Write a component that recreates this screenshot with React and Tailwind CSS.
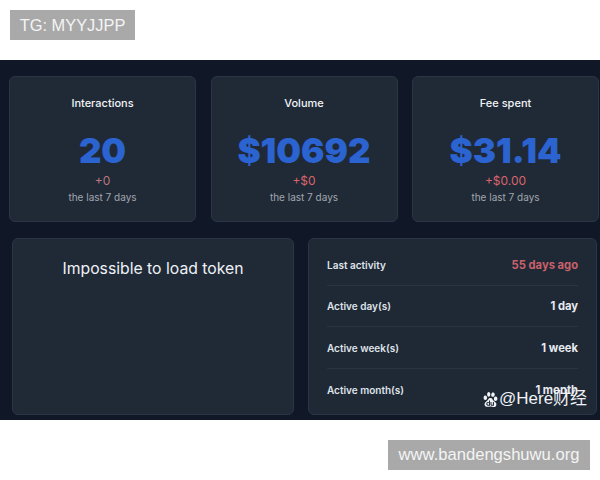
import React from 'react';
import { SiBaidu } from 'react-icons/si';

const stats = [
    { title: 'Interactions', value: '20', delta: '+0', deltaClass: 'text-[#b9777f]' },
    { title: 'Volume', value: '$10692', delta: '+$0', deltaClass: 'text-[#d9646c]' },
    { title: 'Fee spent', value: '$31.14', delta: '+$0.00', deltaClass: 'text-[#d9646c]' },
];

const activity = [
    { label: 'Last activity', value: '55 days ago', valueClass: 'text-[#c9616b]' },
    { label: 'Active day(s)', value: '1 day', valueClass: 'text-[#e8ebf0]' },
    { label: 'Active week(s)', value: '1 week', valueClass: 'text-[#e8ebf0]' },
    { label: 'Active month(s)', value: '1 month', valueClass: 'text-[#e8ebf0]' },
];

const StatCard = ({ title, value, delta, deltaClass }) => (
    <div className="w-[187px] h-[146px] flex flex-col items-center rounded-md border border-[#2b3543] bg-[#202a37] pt-[18px]">
        <h3 className="text-[11px] leading-4 font-medium text-[#f1f3f6]">{title}</h3>
        <div className="mt-[19px] text-[34.8px] leading-[40px] font-black text-[#2b63d0]">{value}</div>
        <div className={`mt-[3px] text-xs leading-4 ${deltaClass}`}>{delta}</div>
        <div className="text-[10px] leading-4 text-[#a0a6ae]">the last 7 days</div>
    </div>
);

export default function App() {
    return (
        <div className="relative w-[600px] h-[480px] overflow-hidden bg-white font-['Inter',sans-serif]">
            <div className="h-[60px] pt-2.5 pl-2.5">
                <span className="inline-flex w-[125px] h-[30px] items-center justify-center bg-[#a9a9a9] font-['Liberation_Sans',sans-serif] text-[16.4px] text-[#f4f4f4]">
                    TG: MYYJJPP
                </span>
            </div>

            <div className="relative h-[360px] bg-[#101827] pt-4">
                <div className="flex gap-[14.5px] pl-[9px]">
                    {stats.map((stat) => (
                        <StatCard key={stat.title} {...stat} />
                    ))}
                </div>

                <div className="mt-4 flex gap-[14px] pl-3">
                    <div className="w-[282px] h-[177px] rounded-md border border-[#2b3543] bg-[#202a37] pt-[18px] text-center text-[15.75px] leading-6 text-[#eef1f5]">
                        Impossible to load token
                    </div>

                    <div className="w-[289px] h-[177px] rounded-md border border-[#2b3543] bg-[#1f2936] px-[18px] pt-[5px]">
                        {activity.map((row, i) => (
                            <div
                                key={row.label}
                                className={`flex h-[41.5px] items-center justify-between pt-[2px] ${i < 3 ? 'border-b border-[#2a3441]' : ''}`}
                            >
                                <span className="text-[10px] font-semibold text-[#dfe3e9]">{row.label}</span>
                                <span className={`text-[11.2px] font-bold ${row.valueClass}`}>{row.value}</span>
                            </div>
                        ))}
                    </div>
                </div>

                {/* watermark sits over the last row */}
                <div className="absolute left-[483px] top-[329px] flex items-center gap-[1px] font-['Liberation_Sans','Noto_Sans_CJK_SC',sans-serif] text-[17px] leading-5 text-[#f0f2f5]">
                    <SiBaidu className="h-[15px] w-[15px]" />
                    <span>@Here财经</span>
                </div>
            </div>

            <div className="flex justify-end pt-5 pr-2.5">
                <span className="inline-flex w-[202px] h-[30px] items-center justify-center bg-[#a9a9a9] font-['Liberation_Sans',sans-serif] text-[16.6px] text-[#f4f4f4]">
                    www.bandengshuwu.org
                </span>
            </div>
        </div>
    );
}
